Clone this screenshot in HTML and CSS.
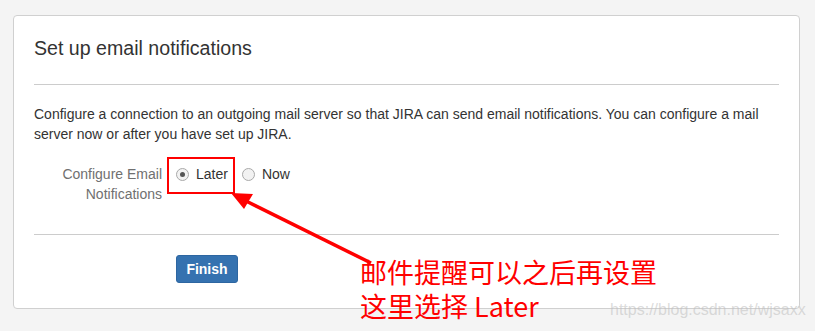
FILE: index.html
```html
<!DOCTYPE html>
<html lang="en">
<head>
  <meta charset="UTF-8" />
  <meta name="viewport" content="width=device-width, initial-scale=1" />
  <title>Set up email notifications</title>
  <link rel="stylesheet" href="styles.css">
</head>
<body>
  <div class="card">
    <h2 class="card-title">Set up email notifications</h2>
    <hr class="divider title-divider">

    <p class="intro">Configure a connection to an outgoing mail server so that JIRA can send email notifications. You can configure a mail server now or after you have set up JIRA.</p>

    <form class="setup-form">
      <div class="field-row">
        <label class="field-label">Configure Email Notifications</label>
        <div class="radio-group">
          <label class="radio-option"><span class="radio checked"></span>Later</label>
          <label class="radio-option"><span class="radio"></span>Now</label>
        </div>
      </div>

      <hr class="divider form-divider">

      <div class="actions">
        <button type="button" class="finish-button">Finish</button>
      </div>
    </form>
  </div>

  <!-- annotation layer -->
  <div class="highlight-box"></div>
  <svg class="arrow" width="815" height="331" viewBox="0 0 815 331">
    <line x1="371" y1="263" x2="246" y2="201" stroke="#ff0000" stroke-width="3.5" />
    <polygon points="231,193 253,194 244,209" fill="#ff0000" />
  </svg>
  <div class="note">
    <div class="note-line">邮件提醒可以之后再设置</div>
    <div class="note-line">这里选择 Later</div>
  </div>
  <div class="watermark">https://blog.csdn.net/wjsaxx</div>
</body>
</html>
```

FILE: styles.css
```css
:root {
  --page-bg: #f4f4f4;
  --card-border: #d0d0d0;
  --text: #333333;
  --muted: #707070;
  --atl-blue: #3572b0;
  --mark-red: #ff0000;
}

body {
  margin: 0;
  padding: 15px 15px 0 13px;
  background: var(--page-bg);
  font-family: "Liberation Sans", Arial, sans-serif;
  color: var(--text);
  position: relative;
  height: 331px;
  box-sizing: border-box;
  overflow: hidden;
}

.card {
  width: 787px;
  height: 294px;
  box-sizing: border-box;
  background: #fff;
  border: 1px solid var(--card-border);
  border-radius: 4px;
  padding: 20px 20px 0 20px;
}

.card-title {
  margin: 0;
  font-size: 19.6px;
  font-weight: normal;
  line-height: 24px;
}

.divider {
  border: none;
  border-top: 1px solid #cccccc;
  margin: 0;
}

.title-divider {
  margin-top: 24px;
}

.intro {
  margin: 19px 0 0 0;
  font-size: 14px;
  line-height: 20px;
}

.setup-form {
  margin-top: 20px;
}

.field-row {
  display: grid;
  grid-template-columns: 128px 1fr;
  column-gap: 14px;
  font-size: 14px;
  line-height: 20px;
}

.field-label {
  text-align: right;
  color: var(--muted);
  padding-left: 22px;
}

.radio-group {
  display: flex;
  gap: 14px;
  align-items: flex-start;
}

.radio-option {
  display: flex;
  align-items: center;
  gap: 7px;
  color: var(--text);
}

.radio {
  width: 11px;
  height: 11px;
  border: 1px solid #a9a9a9;
  border-radius: 50%;
  background: #f2f2f2;
  position: relative;
  box-sizing: content-box;
}

.radio.checked::after {
  content: "";
  position: absolute;
  left: 3px;
  top: 3px;
  width: 5px;
  height: 5px;
  border-radius: 50%;
  background: #555;
}

.form-divider {
  margin-top: 30px;
}

.actions {
  padding-left: 142px;
  margin-top: 20px;
}

.finish-button {
  background-color: var(--atl-blue);
  color: #fff;
  border: 1px solid #2d66a1;
  border-radius: 3px;
  font-family: inherit;
  font-weight: bold;
  font-size: 14px;
  height: 28px;
  width: 62px;
  padding: 0;
  cursor: pointer;
}

.highlight-box {
  position: absolute;
  left: 167px;
  top: 157px;
  width: 64px;
  height: 33px;
  border: 2px solid var(--mark-red);
}

.arrow {
  position: absolute;
  left: 0;
  top: 0;
  pointer-events: none;
}

.note {
  position: absolute;
  left: 360px;
  top: 255px;
  color: var(--mark-red);
  font-family: "Noto Sans CJK SC", "Noto Sans", sans-serif;
  font-size: 27px;
}

.note-line {
  height: 34px;
  line-height: 34px;
}

.watermark {
  position: absolute;
  left: 610px;
  top: 301px;
  font-size: 16px;
  color: rgba(190, 190, 190, 0.55);
}
```
